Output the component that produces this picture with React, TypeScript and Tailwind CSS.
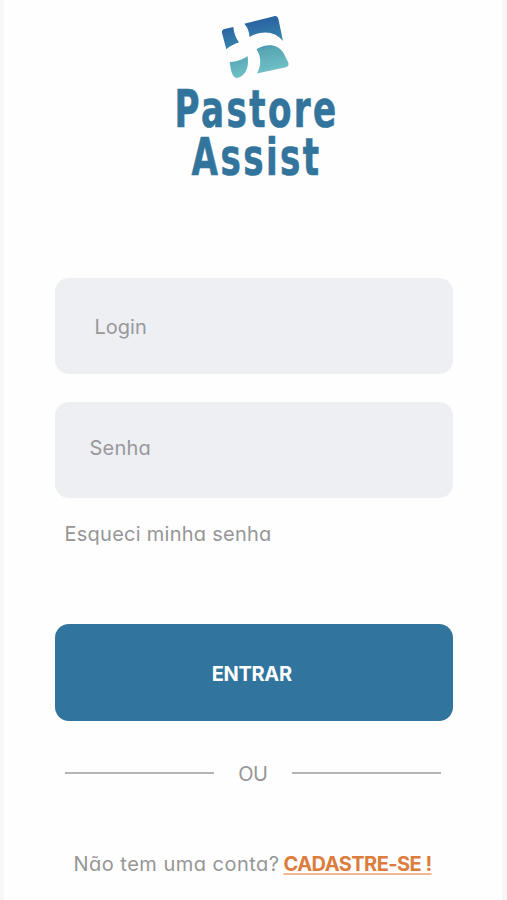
import { useState } from 'react';
import { clsx } from 'clsx';

interface FieldProps {
    name: string;
    type?: string;
    placeholder: string;
    className?: string;
}

function Field({ name, type = 'text', placeholder, className = '' }: FieldProps) {
    const [value, setValue] = useState('');

    return (
        <input
            name={name}
            type={type}
            value={value}
            onChange={(e) => setValue(e.target.value)}
            placeholder={placeholder}
            aria-label={placeholder}
            className={clsx(
                'block h-24 w-full rounded-[14px] bg-[#eeeff3] text-[20px]',
                'text-[#55565a] placeholder:text-[#98989a] outline-none',
                className
            )}
        />
    );
}

function Logo() {
    return (
        <svg className="h-[65px] w-[70px]" viewBox="0 0 70 65" fill="none" aria-hidden="true">
            <defs>
                <linearGradient id="mark" x1="28" y1="4" x2="40" y2="62" gradientUnits="userSpaceOnUse">
                    <stop offset="0.1" stopColor="#2b66a3" />
                    <stop offset="0.38" stopColor="#357fa9" />
                    <stop offset="0.58" stopColor="#58a8b5" />
                    <stop offset="1" stopColor="#72c3c8" />
                </linearGradient>
            </defs>
            <g fill="url(#mark)">
                <path d="M5.5 14L14.3 12C14.8 17.5 16.5 22.5 20 27.4C15.5 28.6 11 31 7.3 34.3L3 18C2.6 16 3.5 14.5 5.5 14Z" />
                <path d="M25.3 8.7L55 1.2C57.5 0.8 58.8 1.8 59.4 4L64 26C55.5 15.8 43.5 15 30.5 21.9C30.2 16.5 28.5 12 25.3 8.7Z" />
                <path d="M10.7 47C17 46.5 23.5 45 28.5 41C30 49.500 28.3 57.5 22 61.5C19.5 63.2 16.5 63.5 14.8 61.5C12.5 58.5 11.5 53 10.7 47Z" />
                <path d="M37.5 34.3C47 28.500 58.5 28.500 64.5 38L69.3 47.5C70 50 69.3 51.5 66.8 52.2L37.8 58.5C42.5 50.5 42.5 42.5 37.5 34.3Z" />
            </g>
        </svg>
    );
}

export default function App() {
    return (
        <div className="min-h-screen bg-[#f7f7f7] pr-[5px] pl-1 font-['Inter',sans-serif] [font-feature-settings:'cv11']">
            <main className="flex h-[900px] flex-col overflow-hidden bg-[#fefefe] pr-[49px] pl-[50.5px] text-[20px] text-[#969696]">
                <header className="flex h-[278px] flex-col items-center pt-[15px]">
                    <Logo />
                    <h1 className="mt-1.5 ml-[5px] flex scale-x-[0.67] flex-col items-center font-['DejaVu_Sans',sans-serif] text-[51px] leading-[47.5px] font-bold tracking-[3.6px] whitespace-nowrap text-[#32749b] [-webkit-text-stroke:0.7px_#32749b]">
                        <span>Pastore</span>
                        <span>Assist</span>
                    </h1>
                </header>

                <form className="flex flex-col" onSubmit={(e) => e.preventDefault()}>
                    <Field name="login" placeholder="Login" className="px-10 pt-0.5" />
                    <Field name="senha" type="password" placeholder="Senha" className="mt-7 px-[35px] pb-1 tracking-[0.2px]" />
                    <a href="#" className="mt-5 ml-2.5 self-start leading-8 tracking-[0.26px]">
                        Esqueci minha senha
                    </a>
                    <button
                        type="submit"
                        className="mt-[74px] h-[97px] rounded-[14px] bg-[#31749d] pt-0.5 pr-1 font-bold tracking-[-0.3px] text-white"
                    >
                        ENTRAR
                    </button>
                </form>

                <div className="mt-9 flex h-8 items-center pr-3 pl-2.5">
                    <span className="h-0.5 flex-1 bg-[#b5b5b5]" />
                    <span className="w-[78px] pt-0.5 text-center tracking-[-0.5px]">OU</span>
                    <span className="h-0.5 flex-1 bg-[#b5b5b5]" />
                </div>

                <p className="mt-[59px] flex items-baseline gap-1 pl-[19px] leading-8 whitespace-nowrap">
                    <span className="tracking-[0.48px]">Não tem uma conta?</span>
                    <a
                        href="#"
                        className="font-bold tracking-[-0.55px] text-[#dc7d3d] underline decoration-[#efb893] decoration-2 underline-offset-2 [text-decoration-skip-ink:none]"
                    >
                        CADASTRE-SE !
                    </a>
                </p>
            </main>
        </div>
    );
}
